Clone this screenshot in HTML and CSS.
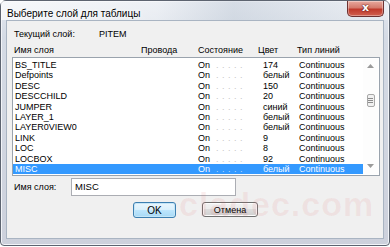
FILE: index.html
```html
<!DOCTYPE html>
<html>
<head>
<meta charset="utf-8">
<link rel="stylesheet" href="styles.css">
</head>
<body>
<div class="window">
  <div class="titlebar">
    <span class="title">Выберите слой для таблицы</span>
    <div class="close"><span>x</span></div>
  </div>
  <div class="client">
    <div class="current"><span class="cur-label">Текущий слой:</span><span>PITEM</span></div>
    <div class="header">
      <span>Имя слоя</span><span>Провода</span><span>Состояние</span><span>Цвет</span><span>Тип линий</span>
    </div>
    <div class="listbox">
      <div class="rows">
        <div class="row"><span>BS_TITLE</span><span class="st">On<i>. . . . .</i></span><span>174</span><span>Continuous</span></div>
        <div class="row"><span>Defpoints</span><span class="st">On<i>. . . . .</i></span><span>белый</span><span>Continuous</span></div>
        <div class="row"><span>DESC</span><span class="st">On<i>. . . . .</i></span><span>150</span><span>Continuous</span></div>
        <div class="row"><span>DESCCHILD</span><span class="st">On<i>. . . . .</i></span><span>20</span><span>Continuous</span></div>
        <div class="row"><span>JUMPER</span><span class="st">On<i>. . . . .</i></span><span>синий</span><span>Continuous</span></div>
        <div class="row"><span>LAYER_1</span><span class="st">On<i>. . . . .</i></span><span>белый</span><span>Continuous</span></div>
        <div class="row"><span>LAYER0VIEW0</span><span class="st">On<i>. . . . .</i></span><span>белый</span><span>Continuous</span></div>
        <div class="row"><span>LINK</span><span class="st">On<i>. . . . .</i></span><span>9</span><span>Continuous</span></div>
        <div class="row"><span>LOC</span><span class="st">On<i>. . . . .</i></span><span>8</span><span>Continuous</span></div>
        <div class="row"><span>LOCBOX</span><span class="st">On<i>. . . . .</i></span><span>92</span><span>Continuous</span></div>
        <div class="row sel"><span>MISC</span><span class="st">On<i>. . . . .</i></span><span>белый</span><span>Continuous</span></div>
      </div>
      <div class="scrollbar">
        <svg class="arrow" width="7" height="4" viewBox="0 0 7 4"><path d="M0 4 L3.5 0 L7 4 Z" fill="#9a9a9a"/></svg>
        <div class="thumb"><svg width="5" height="6" viewBox="0 0 5 6"><path d="M0 .5H5M0 2.5H5M0 4.5H5" stroke="#8c8c8c" stroke-width="1"/></svg></div>
        <svg class="arrow down" width="7" height="4" viewBox="0 0 7 4"><path d="M0 0 L3.5 4 L7 0 Z" fill="#9a9a9a"/></svg>
      </div>
    </div>
    <div class="namerow">
      <span class="name-label">Имя слоя:</span>
      <div class="input">MISC</div>
    </div>
    <div class="buttons">
      <div class="btn ok">OK</div>
      <div class="btn cancel">Отмена</div>
    </div>
    <div class="watermark">cladec.com</div>
  </div>
</div>
</body>
</html>
```

FILE: styles.css
```css
* { box-sizing: border-box; }
html, body { margin: 0; padding: 0; }
body {
  width: 390px;
  height: 247px;
  background: #ffffff;
  font-family: "Liberation Sans", Arial, sans-serif;
  font-size: 9px;
  color: #000;
  overflow: hidden;
}
.window {
  width: 390px;
  height: 246px;
  border: 1px solid #5d6470;
  border-radius: 6px 6px 4px 4px;
  background: linear-gradient(180deg, #e4e9f0 0%, #d5dbe5 15%, #cdd1dc 100%);
  display: flex;
  flex-direction: column;
  box-shadow: inset 0 0 0 1px #f2f4f8;
}
.titlebar {
  height: 19px;
  display: flex;
  align-items: flex-start;
  background: linear-gradient(90deg, rgba(255,255,255,0.7) 0%, rgba(255,255,255,0.35) 40%, rgba(190,200,212,0.35) 60%, rgba(255,255,255,0.3) 100%);
}
.title {
  font-size: 10px;
  margin: 7px 0 0 6px;
  color: #000;
  text-shadow: 0 0 6px #fff, 0 0 3px #fff;
  flex: 1;
}
.close {
  width: 37px;
  height: 16px;
  margin-right: 5px;
  border: 1px solid #6d3131;
  border-top: none;
  border-radius: 0 0 5px 5px;
  background: linear-gradient(180deg, #e8a99e 0%, #d47a6c 45%, #c0392b 55%, #d0604f 100%);
  display: flex;
  justify-content: center;
  align-items: center;
  box-shadow: inset 0 0 0 1px rgba(255,255,255,0.35);
}
.close span {
  font-family: "DejaVu Sans", sans-serif;
  font-weight: bold;
  font-size: 11px;
  color: #fff;
  line-height: 1;
  margin-top: -2px;
  text-shadow: 0 0 1px #5a1a1a, 0 0 2px #5a1a1a;
}
.client {
  position: relative;
  margin: 0 5px 6px 5px;
  flex: 1;
  background: #f0f0f0;
  border: 1px solid #a9b4c2;
  padding: 7px 3px 0 5px;
  display: flex;
  flex-direction: column;
}
.current {
  display: flex;
  height: 12px;
  align-items: center;
  margin-left: 2px;
}
.cur-label { width: 85px; }
.header {
  display: grid;
  grid-template-columns: 127px 57px 60px 39px 1fr;
  height: 12px;
  align-items: center;
  margin-top: 4px;
  margin-left: 2px;
}
.listbox {
  margin-top: 1px;
  height: 119px;
  background: #fff;
  border: 1px solid #9aa3ad;
  display: flex;
  padding: 1px 1px 1px 0;
}
.rows {
  flex: 1;
  padding-top: 1px;
}
.row {
  display: grid;
  grid-template-columns: 183px 65px 36px 1fr;
  height: 10.4px;
  line-height: 10.4px;
  padding-left: 2px;
  white-space: nowrap;
}
.row .st i {
  font-style: normal;
  color: #c4c4c4;
  margin-left: 6px;
  letter-spacing: 0.5px;
}
.row.sel {
  background: #3399ff;
  color: #fff;
}
.row.sel .st i { color: #bcd9f8; }
.scrollbar {
  width: 15px;
  display: flex;
  flex-direction: column;
  align-items: center;
  padding: 5px 0 6px;
  background: #fdfdfd;
}
.thumb {
  width: 8px;
  height: 13px;
  margin-top: 26px;
  border: 1px solid #a8a8a8;
  border-radius: 2px;
  background: #f1f1f1;
  display: flex;
  align-items: center;
  justify-content: center;
}
.arrow.down { margin-top: auto; }
.namerow {
  display: flex;
  align-items: center;
  margin-top: 2px;
  height: 18px;
  margin-left: 2px;
}
.name-label { width: 57px; }
.input {
  width: 165px;
  height: 18px;
  background: #fff;
  border: 1px solid #abadb3;
  padding: 2px 0 0 3px;
  font-size: 9.5px;
}
.buttons {
  display: flex;
  margin-top: 6px;
  margin-left: 121px;
  gap: 26px;
}
.btn {
  height: 16px;
  display: flex;
  align-items: center;
  justify-content: center;
  border-radius: 3px;
  font-size: 9px;
}
.ok {
  width: 43px;
  border: 1px solid #3c7fb1;
  background: linear-gradient(180deg, #eaf6fd 0%, #d9f0fc 50%, #bee6fd 50%, #a7d9f5 100%);
  box-shadow: inset 0 0 0 1px #c5e6f7;
  font-size: 10px;
}
.cancel {
  width: 56px;
  height: 15px;
  border: 1px solid #707070;
  background: linear-gradient(180deg, #f2f2f2 0%, #ebebeb 50%, #dddddd 50%, #cfcfcf 100%);
  box-shadow: inset 0 0 0 1px #fcfcfc;
}
.watermark {
  position: absolute;
  left: 172px;
  top: 164px;
  font-size: 34px;
  font-weight: bold;
  color: rgba(220, 80, 80, 0.09);
  letter-spacing: 1px;
  pointer-events: none;
}
```
